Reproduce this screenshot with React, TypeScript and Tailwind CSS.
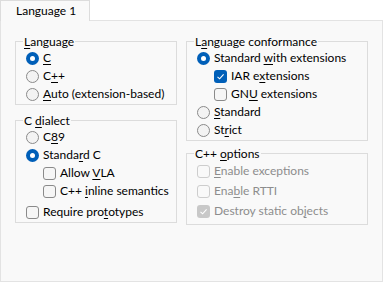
import React from 'react';

// label text with the access-key letter underlined
function withKey(text: string, idx: number) {
  return (
    <span className="whitespace-nowrap">
      {text.slice(0, idx)}
      <u className="underline underline-offset-[2px]">{text.charAt(idx)}</u>
      {text.slice(idx + 1)}
    </span>
  );
}

const Radio: React.FC<{ checked?: boolean }> = ({ checked }) =>
  checked ? (
    <span className="flex h-[13px] w-[13px] shrink-0 items-center justify-center rounded-full bg-[#005fb8]">
      <span className="h-[5px] w-[5px] rounded-full bg-white" />
    </span>
  ) : (
    <span className="h-[13px] w-[13px] shrink-0 rounded-full border border-[#8a8a8a] bg-[#f3f3f3]" />
  );

const Check: React.FC<{ checked?: boolean; disabled?: boolean }> = ({ checked, disabled }) => {
  if (checked) {
    return (
      <span
        className={`flex h-[13px] w-[13px] shrink-0 items-center justify-center rounded-[3px] ${
          disabled ? 'bg-[#c8c8c8]' : 'bg-[#005fb8]'
        }`}
      >
        <svg width="9" height="9" viewBox="0 0 9 9" fill="none">
          <path d="M1.5 4.8 L3.6 6.8 L7.6 2.3" stroke="white" strokeWidth="1.1" />
        </svg>
      </span>
    );
  }
  return (
    <span
      className={`h-[13px] w-[13px] shrink-0 rounded-[3px] border ${
        disabled ? 'border-[#cdcdcd] bg-[#f9f9f9]' : 'border-[#8a8a8a] bg-[#f6f6f6]'
      }`}
    />
  );
};

const Row: React.FC<{ children: React.ReactNode; className?: string; disabled?: boolean }> = ({
  children,
  className = 'h-[18px]',
  disabled,
}) => (
  <div className={`flex items-center gap-[4px] ${className} ${disabled ? 'text-[#8d8d8d]' : 'text-black'}`}>
    {children}
  </div>
);

const Group: React.FC<{ title: React.ReactNode; className?: string; children: React.ReactNode }> = ({
  title,
  className = '',
  children,
}) => (
  <fieldset className={`border border-[#dcdcdc] pl-[10px] ${className}`}>
    <legend className="-ml-[3px] px-[1px] leading-[15px] text-black">{title}</legend>
    {children}
  </fieldset>
);

export default function App() {
  return (
    <div
      className="h-[282px] w-[383px] bg-white text-[12px]"
      style={{ fontFamily: 'Lato, "Liberation Sans", sans-serif' }}
    >
      {/* Tab strip */}
      <div className="flex h-[20px]">
        <div className="relative z-10 flex h-[21px] w-[90px] items-center border-x border-t border-[#dcdcdc] bg-[#f9f9f9] pl-[15px] text-black">
          Language 1
        </div>
      </div>

      {/* Page */}
      <div className="flex h-[262px] gap-[9px] border border-[#e3e3e3] bg-[#f9f9f9] pl-[14px] pt-[13px]">
        {/* Left column */}
        <div className="flex w-[162px] flex-col">
          <Group title={withKey('Language', 0)} className="pb-[1px]">
            <Row>
              <Radio checked />
              {withKey('C', 0)}
            </Row>
            <Row>
              <Radio />
              {withKey('C++', 1)}
            </Row>
            <Row>
              <Radio />
              {withKey('Auto (extension-based)', 0)}
            </Row>
          </Group>

          <Group title={withKey('C dialect', 2)} className="mt-[8px] pb-[1px]">
            <Row>
              <Radio />
              {withKey('C89', 1)}
            </Row>
            <Row>
              <Radio checked />
              {withKey('Standard C', 6)}
            </Row>
            <Row className="h-[18px] pl-[17px]">
              <Check />
              {withKey('Allow VLA', 6)}
            </Row>
            <Row className="h-[18px] pl-[17px]">
              <Check />
              {withKey('C++ inline semantics', 4)}
            </Row>
            <Row className="mt-[3px] h-[18px]">
              <Check />
              {withKey('Require prototypes', 11)}
            </Row>
          </Group>
        </div>

        {/* Right column */}
        <div className="flex w-[182px] flex-col">
          <Group title={withKey('Language conformance', 1)} className="pb-[1px]">
            <Row>
              <Radio checked />
              {withKey('Standard with extensions', 9)}
            </Row>
            <Row className="h-[18px] pl-[17px]">
              <Check checked />
              {withKey('IAR extensions', 5)}
            </Row>
            <Row className="h-[18px] pl-[17px]">
              <Check />
              {withKey('GNU extensions', 2)}
            </Row>
            <Row>
              <Radio />
              {withKey('Standard', 0)}
            </Row>
            <Row>
              <Radio />
              {withKey('Strict', 2)}
            </Row>
          </Group>

          <Group title={withKey('C++ options', 4)} className="mt-[5px] pb-[3px]">
            <Row className="h-[20px]" disabled>
              <Check disabled />
              {withKey('Enable exceptions', 0)}
            </Row>
            <Row className="h-[20px]" disabled>
              <Check disabled />
              {withKey('Enable RTTI', 3)}
            </Row>
            <Row className="h-[20px]" disabled>
              <Check checked disabled />
              {withKey('Destroy static objects', 17)}
            </Row>
          </Group>
        </div>
      </div>
    </div>
  );
}
